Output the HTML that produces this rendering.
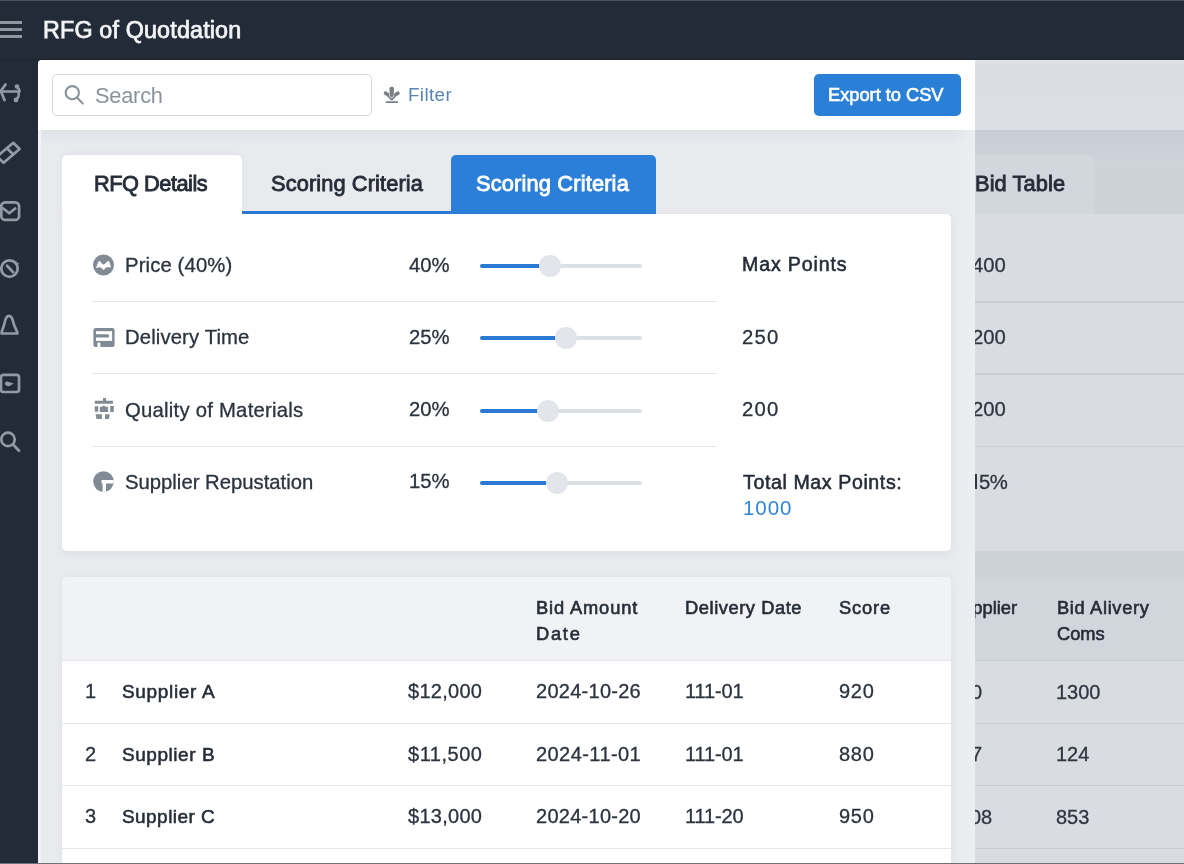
<!DOCTYPE html>
<html><head><meta charset="utf-8">
<style>
*{margin:0;padding:0;box-sizing:border-box}
html,body{width:1184px;height:864px;overflow:hidden;background:#232b39;font-family:"Liberation Sans",sans-serif}
.a{position:absolute}
.t{position:absolute;white-space:nowrap;line-height:1;will-change:transform}
</style></head>
<body>
<div class="a" style="left:0px;top:0px;width:1184px;height:864px;background:#232b39;"></div>
<div class="a" style="left:38px;top:60px;width:937px;height:804px;background:#e8eaee;border-top-left-radius:4px;"></div>
<div class="a" style="left:38px;top:60px;width:937px;height:70px;background:#ffffff;border-top-left-radius:4px;"></div>
<div class="a" style="left:38px;top:130px;width:937px;height:14px;background:linear-gradient(#dfe2e7,#e8eaee);"></div>
<div class="a" style="left:38px;top:130px;width:2.5px;height:734px;background:#f1f3f6;"></div>
<div class="a" style="left:975px;top:60px;width:209px;height:70px;background:linear-gradient(#e0e3e7,#dadde2 6px,#dcdfe4);"></div>
<div class="a" style="left:975px;top:130px;width:209px;height:734px;background:#d9dce1;"></div>
<div class="a" style="left:975px;top:130px;width:209px;height:84px;background:linear-gradient(#c8cdd5,#ced3da 30px,#cdd2d9);"></div>
<div class="a" style="left:975px;top:155px;width:119px;height:59px;background:#d2d6dd;border-top-right-radius:5px;"></div>
<div class="a" style="left:975px;top:551px;width:209px;height:26px;background:#cdd1d8;"></div>
<div class="a" style="left:975px;top:577px;width:209px;height:83px;background:#d1d5dc;"></div>
<div class="a" style="left:975px;top:301.3px;width:209px;height:1.3px;background:#caced6;"></div>
<div class="a" style="left:975px;top:373.3px;width:209px;height:1.3px;background:#caced6;"></div>
<div class="a" style="left:975px;top:445.5px;width:209px;height:1.3px;background:#caced6;"></div>
<div class="a" style="left:975px;top:660px;width:209px;height:1.2px;background:#c8cdd5;"></div>
<div class="a" style="left:975px;top:722.5px;width:209px;height:1.2px;background:#c8cdd5;"></div>
<div class="a" style="left:975px;top:785px;width:209px;height:1.2px;background:#c8cdd5;"></div>
<div class="a" style="left:975px;top:847.8px;width:209px;height:1.2px;background:#c8cdd5;"></div>
<div class="a" style="left:951px;top:130px;width:24px;height:734px;background:linear-gradient(to right,rgba(231,234,238,0),#eceef2);"></div>
<div class="t" style="left:43.2px;top:18.98px;font-size:23.3px;color:#f3f4f6;-webkit-text-stroke:0.75px #f3f4f6;letter-spacing:0.166px;">RFG of Quotdation</div>
<div class="a" style="left:-2px;top:20.8px;width:24px;height:3px;background:#9096a0;"></div>
<div class="a" style="left:-2px;top:28.1px;width:24px;height:3px;background:#9096a0;"></div>
<div class="a" style="left:-2px;top:35.2px;width:24px;height:3px;background:#9096a0;"></div>
<div class="a" style="left:52px;top:74px;width:320px;height:42px;background:#fff;border:1.5px solid #d3d7dc;border-radius:5px;"></div>
<div class="t" style="left:95.4px;top:85.35px;font-size:21.8px;color:#8a939c;letter-spacing:-0.22px;">Search</div>
<div class="t" style="left:407.5px;top:85.99px;font-size:18.8px;color:#5a86b5;letter-spacing:0.38px;">Filter</div>
<div class="a" style="left:813.5px;top:74px;width:147.5px;height:42px;background:#2a7fd6;border-radius:5px;"></div>
<div class="t" style="left:828.4px;top:85.91px;font-size:18.3px;color:#ffffff;-webkit-text-stroke:0.6px #ffffff;letter-spacing:-0.025px;">Export to CSV</div>
<div class="a" style="left:62px;top:155px;width:180px;height:59px;background:#ffffff;border-radius:5px 5px 0 0;box-shadow:0 -1px 6px rgba(40,50,70,.05);"></div>
<div class="a" style="left:242px;top:211px;width:209px;height:3px;background:#2a7ad4;"></div>
<div class="a" style="left:451px;top:155px;width:205px;height:59px;background:#2b7fd8;border-radius:5px 5px 0 0;"></div>
<div class="t" style="left:94.0px;top:173.45px;font-size:21.8px;color:#262d38;-webkit-text-stroke:0.85px #262d38;letter-spacing:-0.505px;">RFQ Details</div>
<div class="t" style="left:271.3px;top:173.45px;font-size:21.8px;color:#262d38;-webkit-text-stroke:0.85px #262d38;letter-spacing:0.11px;">Scoring Criteria</div>
<div class="t" style="left:476.2px;top:173.45px;font-size:21.8px;color:#ffffff;-webkit-text-stroke:0.85px #ffffff;letter-spacing:0.17px;">Scoring Criteria</div>
<div class="a" style="left:62px;top:214px;width:889px;height:337px;background:#ffffff;border-radius:0 5px 5px 5px;box-shadow:0 2px 8px rgba(40,50,70,.06);"></div>
<div class="a" style="left:62px;top:200px;width:180px;height:18px;background:#ffffff;"></div>
<div class="a" style="left:92px;top:301.3px;width:625px;height:1.2px;background:#e4e8ed;"></div>
<div class="a" style="left:92px;top:373.3px;width:625px;height:1.2px;background:#e4e8ed;"></div>
<div class="a" style="left:92px;top:445.5px;width:625px;height:1.2px;background:#e4e8ed;"></div>
<div class="t" style="left:124.9px;top:254.92px;font-size:20.3px;color:#2c333e;-webkit-text-stroke:0.3px #2c333e;letter-spacing:0.13px;">Price (40%)</div>
<div class="t" style="left:408.5px;top:255.22px;font-size:20.3px;color:#2c333e;-webkit-text-stroke:0.3px #2c333e;letter-spacing:-0.05px;">40%</div>
<div class="a" style="left:479.5px;top:263.8px;width:162px;height:4px;background:#dcdfe3;border-radius:2px;"></div>
<div class="a" style="left:479.5px;top:263.8px;width:70.89999999999998px;height:4px;background:#2a7ad4;border-radius:2px;"></div>
<div class="a" style="left:539.4px;top:254.8px;width:22px;height:22px;background:#e2e5ea;border-radius:50%;"></div>
<div class="t" style="left:124.9px;top:327.32px;font-size:20.3px;color:#2c333e;-webkit-text-stroke:0.3px #2c333e;letter-spacing:0.125px;">Delivery Time</div>
<div class="t" style="left:408.5px;top:327.12px;font-size:20.3px;color:#2c333e;-webkit-text-stroke:0.3px #2c333e;letter-spacing:-0.05px;">25%</div>
<div class="a" style="left:479.5px;top:336.3px;width:162px;height:4px;background:#dcdfe3;border-radius:2px;"></div>
<div class="a" style="left:479.5px;top:336.3px;width:86.79999999999995px;height:4px;background:#2a7ad4;border-radius:2px;"></div>
<div class="a" style="left:555.3px;top:327.3px;width:22px;height:22px;background:#e2e5ea;border-radius:50%;"></div>
<div class="t" style="left:124.9px;top:399.82px;font-size:20.3px;color:#2c333e;-webkit-text-stroke:0.3px #2c333e;letter-spacing:0.242px;">Quality of Materials</div>
<div class="t" style="left:408.5px;top:399.02px;font-size:20.3px;color:#2c333e;-webkit-text-stroke:0.3px #2c333e;letter-spacing:-0.05px;">20%</div>
<div class="a" style="left:479.5px;top:408.7px;width:162px;height:4px;background:#dcdfe3;border-radius:2px;"></div>
<div class="a" style="left:479.5px;top:408.7px;width:68.10000000000002px;height:4px;background:#2a7ad4;border-radius:2px;"></div>
<div class="a" style="left:536.6px;top:399.7px;width:22px;height:22px;background:#e2e5ea;border-radius:50%;"></div>
<div class="t" style="left:124.9px;top:472.02px;font-size:20.3px;color:#2c333e;-webkit-text-stroke:0.3px #2c333e;">Supplier Repustation</div>
<div class="t" style="left:408.5px;top:471.12px;font-size:20.3px;color:#2c333e;-webkit-text-stroke:0.3px #2c333e;letter-spacing:-0.05px;">15%</div>
<div class="a" style="left:479.5px;top:480.5px;width:162px;height:4px;background:#dcdfe3;border-radius:2px;"></div>
<div class="a" style="left:479.5px;top:480.5px;width:77.0px;height:4px;background:#2a7ad4;border-radius:2px;"></div>
<div class="a" style="left:545.5px;top:471.5px;width:22px;height:22px;background:#e2e5ea;border-radius:50%;"></div>
<div class="t" style="left:742.4px;top:255.11px;font-size:19.6px;color:#262d38;-webkit-text-stroke:0.55px #262d38;letter-spacing:0.839px;">Max Points</div>
<div class="t" style="left:742.2px;top:327.12px;font-size:20.3px;color:#2c333e;-webkit-text-stroke:0.3px #2c333e;letter-spacing:1.2px;">250</div>
<div class="t" style="left:742.2px;top:399.12px;font-size:20.3px;color:#2c333e;-webkit-text-stroke:0.3px #2c333e;letter-spacing:1.2px;">200</div>
<div class="t" style="left:743.1px;top:472.71px;font-size:19.6px;color:#262d38;-webkit-text-stroke:0.55px #262d38;letter-spacing:0.597px;">Total Max Points:</div>
<div class="t" style="left:742.5px;top:498.35px;font-size:20.5px;color:#2f86d9;letter-spacing:0.967px;">1000</div>
<div class="a" style="left:62px;top:577px;width:889px;height:287px;background:#ffffff;border-radius:5px 5px 0 0;box-shadow:0 0 8px rgba(40,50,70,.045);"></div>
<div class="a" style="left:62px;top:577px;width:889px;height:83px;background:#f0f2f5;border-radius:5px 5px 0 0;"></div>
<div class="a" style="left:62px;top:660px;width:889px;height:1.2px;background:#e3e6ea;"></div>
<div class="a" style="left:62px;top:722.5px;width:889px;height:1.2px;background:#e3e6ea;"></div>
<div class="a" style="left:62px;top:785px;width:889px;height:1.2px;background:#e3e6ea;"></div>
<div class="a" style="left:62px;top:847.8px;width:889px;height:1.2px;background:#e3e6ea;"></div>
<div class="t" style="left:535.8px;top:599.21px;font-size:18.3px;color:#262d38;-webkit-text-stroke:0.6px #262d38;letter-spacing:0.867px;">Bid Amount</div>
<div class="t" style="left:535.8px;top:625.31px;font-size:18.3px;color:#262d38;-webkit-text-stroke:0.6px #262d38;letter-spacing:1.733px;">Date</div>
<div class="t" style="left:685.3px;top:599.21px;font-size:18.3px;color:#262d38;-webkit-text-stroke:0.6px #262d38;letter-spacing:0.567px;">Delivery Date</div>
<div class="t" style="left:839.1px;top:599.21px;font-size:18.3px;color:#262d38;-webkit-text-stroke:0.6px #262d38;letter-spacing:0.825px;">Score</div>
<div class="t" style="left:84.5px;top:681.37px;font-size:20px;color:#2c333e;-webkit-text-stroke:0.3px #2c333e;">1</div>
<div class="t" style="left:121.8px;top:682.22px;font-size:19px;color:#262d38;-webkit-text-stroke:0.55px #262d38;letter-spacing:0.672px;">Supplier A</div>
<div class="t" style="left:408.4px;top:681.37px;font-size:20px;color:#2c333e;-webkit-text-stroke:0.3px #2c333e;letter-spacing:0.267px;">$12,000</div>
<div class="t" style="left:535.6px;top:681.37px;font-size:20px;color:#2c333e;-webkit-text-stroke:0.3px #2c333e;letter-spacing:0.267px;">2024-10-26</div>
<div class="t" style="left:685.1px;top:681.37px;font-size:20px;color:#2c333e;-webkit-text-stroke:0.3px #2c333e;letter-spacing:-0.12px;">111-01</div>
<div class="t" style="left:838.9px;top:681.37px;font-size:20px;color:#2c333e;-webkit-text-stroke:0.3px #2c333e;letter-spacing:0.7px;">920</div>
<div class="t" style="left:84.5px;top:743.87px;font-size:20px;color:#2c333e;-webkit-text-stroke:0.3px #2c333e;">2</div>
<div class="t" style="left:121.8px;top:744.72px;font-size:19px;color:#262d38;-webkit-text-stroke:0.55px #262d38;letter-spacing:0.55px;">Supplier B</div>
<div class="t" style="left:408.4px;top:743.87px;font-size:20px;color:#2c333e;-webkit-text-stroke:0.3px #2c333e;letter-spacing:0.517px;">$11,500</div>
<div class="t" style="left:535.6px;top:743.87px;font-size:20px;color:#2c333e;-webkit-text-stroke:0.3px #2c333e;letter-spacing:0.433px;">2024-11-01</div>
<div class="t" style="left:685.1px;top:743.87px;font-size:20px;color:#2c333e;-webkit-text-stroke:0.3px #2c333e;letter-spacing:-0.12px;">111-01</div>
<div class="t" style="left:838.9px;top:743.87px;font-size:20px;color:#2c333e;-webkit-text-stroke:0.3px #2c333e;letter-spacing:0.7px;">880</div>
<div class="t" style="left:84.5px;top:806.47px;font-size:20px;color:#2c333e;-webkit-text-stroke:0.3px #2c333e;">3</div>
<div class="t" style="left:121.8px;top:807.32px;font-size:19px;color:#262d38;-webkit-text-stroke:0.55px #262d38;letter-spacing:0.439px;">Supplier C</div>
<div class="t" style="left:408.4px;top:806.47px;font-size:20px;color:#2c333e;-webkit-text-stroke:0.3px #2c333e;letter-spacing:0.267px;">$13,000</div>
<div class="t" style="left:535.6px;top:806.47px;font-size:20px;color:#2c333e;-webkit-text-stroke:0.3px #2c333e;letter-spacing:0.267px;">2024-10-20</div>
<div class="t" style="left:685.1px;top:806.47px;font-size:20px;color:#2c333e;-webkit-text-stroke:0.3px #2c333e;letter-spacing:-0.12px;">111-20</div>
<div class="t" style="left:838.9px;top:806.47px;font-size:20px;color:#2c333e;-webkit-text-stroke:0.3px #2c333e;letter-spacing:0.7px;">950</div>
<svg class="a" style="left:0px;top:80px;" width="24" height="24" viewBox="0 0 24 24"><g fill="none" stroke="#939aa4" stroke-width="2.7" stroke-linecap="round" stroke-linejoin="round"><path d="M5.5 4.5 L0.8 11 L4.5 20"/><path d="M0 11.5 H19.5"/><path d="M17 7 C19 8.5 19.5 10 19 11.5"/><path d="M18.5 12.5 C19.5 15 18 18 16 19.5"/></g><circle cx="17" cy="6.5" r="2.3" fill="#939aa4"/><circle cx="16" cy="20" r="2.4" fill="#939aa4"/></svg>
<svg class="a" style="left:0px;top:140px;" width="24" height="26" viewBox="0 0 24 26"><g fill="none" stroke="#939aa4" stroke-width="2.7" stroke-linecap="round" stroke-linejoin="round"><path d="M13.3 2.8 L19.6 9 L3.6 22.8 L-3 16.5 Z"/><path d="M7 8.3 L13.3 14.5"/></g></svg>
<svg class="a" style="left:0px;top:199px;" width="24" height="24" viewBox="0 0 24 24"><g fill="none" stroke="#939aa4" stroke-width="2.7" stroke-linecap="round" stroke-linejoin="round"><rect x="1.3" y="3.3" width="17.8" height="17.6" rx="4"/><path d="M3.2 9.5 L9.2 14.3 L15.2 9.5"/></g></svg>
<svg class="a" style="left:0px;top:256px;" width="24" height="24" viewBox="0 0 24 24"><g fill="none" stroke="#939aa4" stroke-width="2.7" stroke-linecap="round" stroke-linejoin="round"><circle cx="9.5" cy="12.6" r="8.2"/><path d="M7 9.8 L13.2 16.2"/></g><path d="M13 4.5 L18.5 8" stroke="#939aa4" stroke-width="2" stroke-dasharray="1.3 1.3" fill="none"/></svg>
<svg class="a" style="left:0px;top:312px;" width="24" height="26" viewBox="0 0 24 26"><g fill="none" stroke="#939aa4" stroke-width="2.7" stroke-linecap="round" stroke-linejoin="round"><path d="M1.5 21.5 C1.5 19 3.5 16 4.5 11 C5.5 6 7 3.8 9 3.8 C11 3.8 12.5 6 13.5 11 C14.5 16 17.5 19 17.5 21.5 Z"/></g></svg>
<svg class="a" style="left:0px;top:372px;" width="24" height="24" viewBox="0 0 24 24"><g fill="none" stroke="#939aa4" stroke-width="2.7" stroke-linecap="round" stroke-linejoin="round"><rect x="1" y="2.8" width="18" height="17.2" rx="2.5"/></g><path d="M4.8 11.5 C5 9.5 7.5 9 8.5 10 L13.8 11.5 L9.5 14 C8 14.5 5 14 4.8 11.5 Z" fill="#939aa4"/></svg>
<svg class="a" style="left:0px;top:429px;" width="24" height="26" viewBox="0 0 24 26"><g fill="none" stroke="#939aa4" stroke-width="2.7" stroke-linecap="round" stroke-linejoin="round"><circle cx="8" cy="10.4" r="6.7"/><path d="M13 15.5 L19 21.8"/></g></svg>
<svg class="a" style="left:60px;top:80px;" width="30" height="30" viewBox="0 0 30 30"><g fill="none" stroke="#8a939c" stroke-width="2.1" stroke-linecap="round"><circle cx="12.3" cy="12.7" r="6.6"/><path d="M17.3 17.8 L22.8 23.6"/></g></svg>
<svg class="a" style="left:378px;top:80px;" width="30" height="30" viewBox="0 0 30 30"><g fill="none" stroke="#7b8087" stroke-linecap="round"><path d="M7.6 13.2 C9.5 13.8 11.5 15.5 13.6 18.2" stroke-width="3.8"/><path d="M19.8 13.2 C17.9 13.8 15.9 15.5 13.8 18.2" stroke-width="3.8"/></g><path d="M11.4 8.6 C11.4 6 16 6 16 8.6 L15.6 15.8 L13.7 17.8 L11.8 15.8 Z" fill="#7b8087" stroke="#fff" stroke-width="1.1" paint-order="stroke"/><rect x="7.6" y="21.2" width="12.5" height="1.9" rx=".9" fill="#7b8087"/></svg>
<svg class="a" style="left:88px;top:250px;" width="30" height="30" viewBox="0 0 30 30"><circle cx="15.5" cy="15" r="10.5" fill="#808b96"/><path d="M8 18 C9.5 14 10.5 11 11.3 11 C12.5 11 14 14.5 15.5 14.5 C17 14.5 19 11 20.5 11 C21.5 11 22.5 15 23 17.5 C21 17.3 19.5 17.3 18.5 17.3 C17.5 17.3 16.5 20 15.5 20 C14.5 20 13.5 17.3 12.5 17.3 C11 17.3 9.5 17.8 8 18 Z" fill="#fff"/></svg>
<svg class="a" style="left:88px;top:322px;" width="30" height="30" viewBox="0 0 30 30"><rect x="5.4" y="5.9" width="21.2" height="19.1" rx="2.5" fill="#808b96"/><rect x="8" y="9.2" width="16.1" height="9.7" fill="#fff"/><rect x="6" y="12.2" width="15.2" height="3.4" rx="1.5" fill="#808b96"/><rect x="9.4" y="20.5" width="2.9" height="5" rx="1" fill="#fff"/></svg>
<svg class="a" style="left:88px;top:394px;" width="30" height="30" viewBox="0 0 30 30"><rect x="6.8" y="6.8" width="18.2" height="2.9" rx=".5" fill="#808b96"/><rect x="15" y="4" width="3" height="4" fill="#808b96"/><rect x="6.8" y="12.2" width="3.4" height="5.5" fill="#808b96"/><path d="M11.8 13 L14.5 12.5 L15.5 11.5 L17.5 12.5 L20.1 13 L20.1 18 L11.8 18 Z" fill="#808b96"/><rect x="22.2" y="12" width="3.6" height="6" fill="#808b96"/><path d="M7.6 20.3 L13.9 20.3 L13.9 25 L8.5 25 Z" fill="#808b96"/><path d="M17 20.3 L21.7 20.3 L21 25 L17 25 Z" fill="#808b96"/></svg>
<svg class="a" style="left:88px;top:466px;" width="30" height="30" viewBox="0 0 30 30"><defs><clipPath id="cc"><circle cx="15.5" cy="15.6" r="10.3"/></clipPath></defs><g clip-path="url(#cc)"><rect x="0" y="0" width="30" height="30" fill="#808b96"/><rect x="13.5" y="14" width="17" height="3.5" fill="#fff"/><rect x="14.6" y="14" width="3.4" height="16" fill="#fff"/></g></svg>
<div class="a" style="left:975px;top:61px;width:209px;height:803px;overflow:hidden">
<div class="t" style="left:-0.2px;top:111.95px;font-size:21.8px;color:#262d38;-webkit-text-stroke:0.85px #262d38;letter-spacing:0.1px;">Bid Table</div>
<div class="t" style="left:-3.0px;top:193.82px;font-size:20.3px;color:#2f3640;-webkit-text-stroke:0.3px #2f3640;">400</div>
<div class="t" style="left:-3.0px;top:266.12px;font-size:20.3px;color:#2f3640;-webkit-text-stroke:0.3px #2f3640;">200</div>
<div class="t" style="left:-3.0px;top:338.12px;font-size:20.3px;color:#2f3640;-webkit-text-stroke:0.3px #2f3640;">200</div>
<div class="a" style="left:0px;top:413.4px;width:2px;height:14.2px;background:#2f3640;"></div>
<div class="t" style="left:3.8px;top:410.62px;font-size:20.3px;color:#2f3640;-webkit-text-stroke:0.3px #2f3640;letter-spacing:-0.6px;">5%</div>
<div class="t" style="left:-25.5px;top:537.81px;font-size:18.3px;color:#262d38;-webkit-text-stroke:0.6px #262d38;">Supplier</div>
<div class="t" style="left:82.0px;top:537.81px;font-size:18.3px;color:#262d38;-webkit-text-stroke:0.6px #262d38;letter-spacing:0.65px;">Bid Alivery</div>
<div class="t" style="left:82.0px;top:563.81px;font-size:18.3px;color:#262d38;-webkit-text-stroke:0.6px #262d38;">Coms</div>
<div class="t" style="left:-4.5px;top:620.57px;font-size:20px;color:#2f3640;-webkit-text-stroke:0.3px #2f3640;">0</div>
<div class="t" style="left:81.0px;top:620.57px;font-size:20px;color:#2f3640;-webkit-text-stroke:0.3px #2f3640;">1300</div>
<div class="t" style="left:-4.0px;top:683.07px;font-size:20px;color:#2f3640;-webkit-text-stroke:0.3px #2f3640;">7</div>
<div class="t" style="left:81.0px;top:683.07px;font-size:20px;color:#2f3640;-webkit-text-stroke:0.3px #2f3640;">124</div>
<div class="t" style="left:-5.0px;top:745.57px;font-size:20px;color:#2f3640;-webkit-text-stroke:0.3px #2f3640;">08</div>
<div class="t" style="left:81.0px;top:745.57px;font-size:20px;color:#2f3640;-webkit-text-stroke:0.3px #2f3640;">853</div>
</div>
<div class="a" style="left:0px;top:862.6px;width:1184px;height:1.4px;background:#6d7279;"></div>
<div class="a" style="left:0px;top:0px;width:1184px;height:1px;background:#4a515c;"></div>
<div class="a" style="left:0px;top:59px;width:1184px;height:1px;background:#1f2632;"></div>

</body></html>
